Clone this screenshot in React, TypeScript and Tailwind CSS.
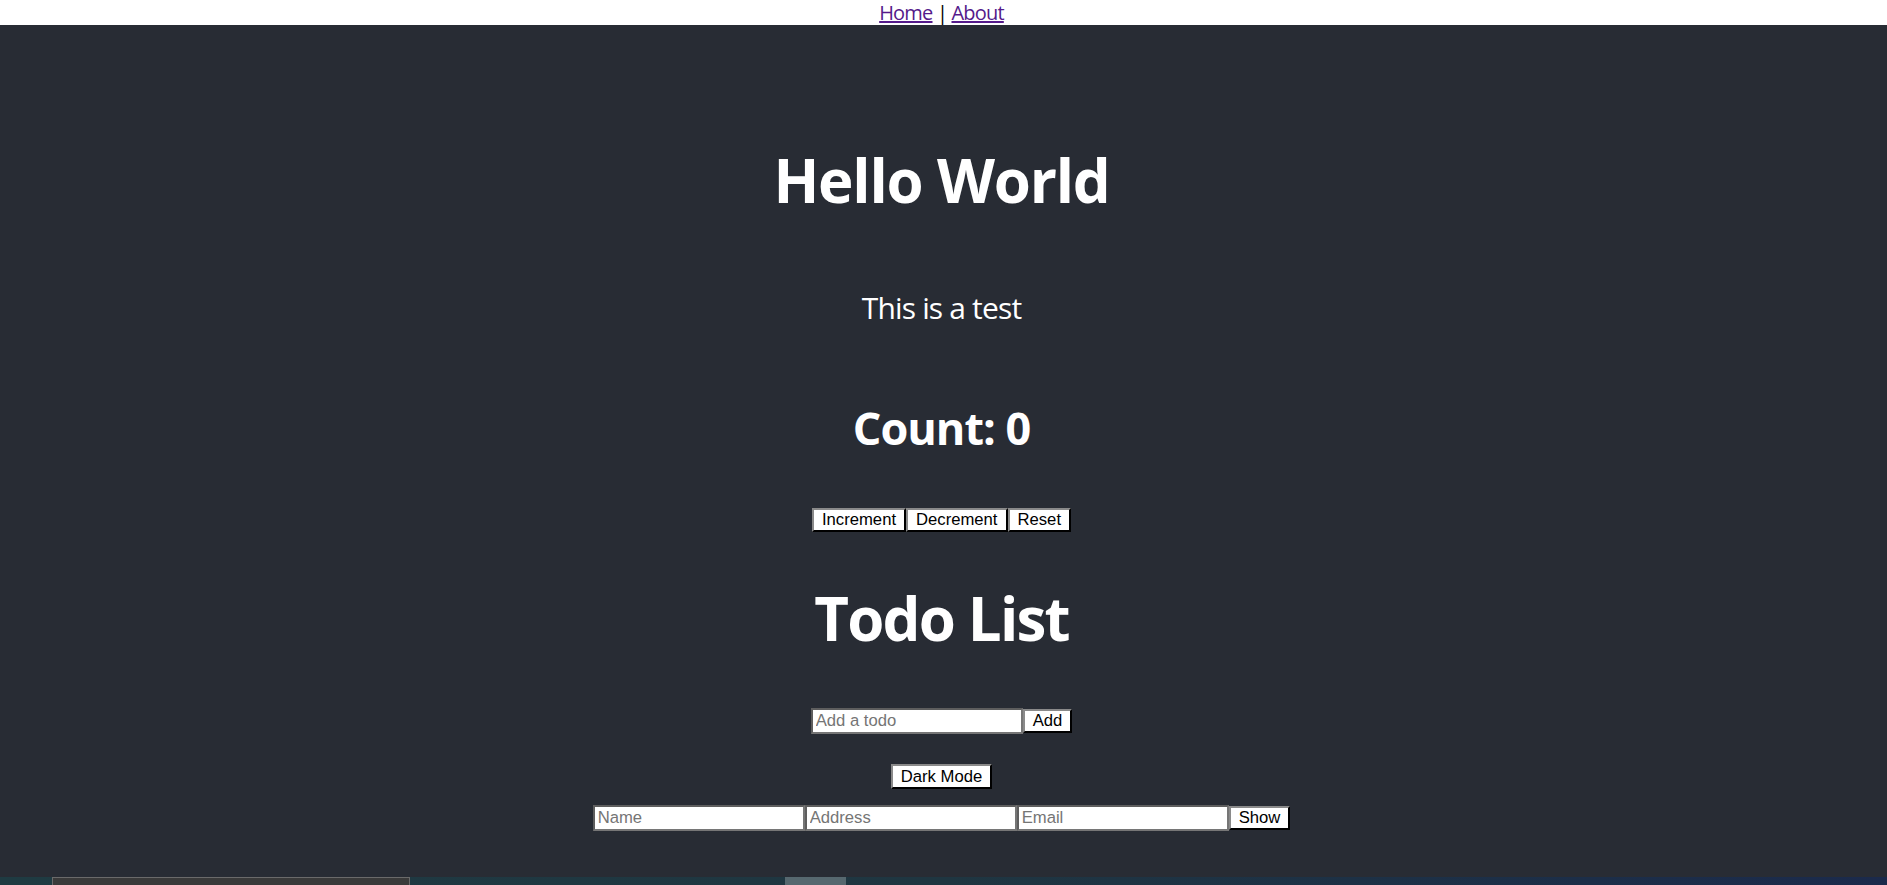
import { useState } from "react";

const btn =
  "bg-white px-[8px] h-[24px] border-2 border-t-[#8a8a8a] border-l-[#8a8a8a] border-r-black border-b-black text-black text-[16.67px] leading-[18px] font-['Liberation_Sans',Arial,sans-serif]";
const field =
  "bg-white w-[212px] h-[26px] px-[3px] border-2 border-[#767676] border-t-[#5e5e5e] border-l-[#5e5e5e] text-black text-[16.67px] font-['Liberation_Sans',Arial,sans-serif] placeholder:text-[#757575] outline-none";

function App() {
  const [count, setCount] = useState(0);
  const [todo, setTodo] = useState("");
  const [todos, setTodos] = useState<string[]>([]);
  const [dark, setDark] = useState(true);

  const addTodo = () => {
    if (!todo.trim()) return;
    setTodos([...todos, todo]);
    setTodo("");
  };

  return (
    <div className="w-[1887px] h-[885px] overflow-hidden font-['Open_Sans','Noto_Sans',sans-serif]">
      {/* Nav */}
      <div className="h-[25px] bg-white pr-[4px] text-center text-[20px] leading-[25px] tracking-[-0.04em] text-black">
        <a href="#" className="text-[#551a8b] underline">
          Home
        </a>{" "}
        |{" "}
        <a href="#" className="text-[#551a8b] underline">
          About
        </a>
      </div>

      {/* Header */}
      <div
        className={`flex h-[852px] flex-col items-center pt-[125px] pr-[4px] text-white ${
          dark ? "bg-[#282c34]" : "bg-[#3a3f4a]"
        }`}
      >
        <h1 className="text-[60px] font-bold leading-[60px] tracking-[-0.02em]">
          Hello World
        </h1>
        <p className="mt-[83px] text-[30px] leading-[30px] tracking-[-0.028em]">
          This is a test
        </p>
        <h2 className="mt-[82px] text-[45px] font-bold leading-[45px] tracking-[-0.022em]">
          Count: {count}
        </h2>
        <div className="mt-[58px] flex">
          <button className={btn} onClick={() => setCount(count + 1)}>
            Increment
          </button>
          <button className={btn} onClick={() => setCount(count - 1)}>
            Decrement
          </button>
          <button className={btn} onClick={() => setCount(0)}>
            Reset
          </button>
        </div>

        <h1 className="mt-[56px] text-[60px] font-bold leading-[60px] tracking-[-0.03em]">
          Todo List
        </h1>
        <div className="mt-[60px] flex items-center">
          <input
            value={todo}
            onChange={(e) => setTodo(e.target.value)}
            placeholder="Add a todo"
            className={field}
          />
          <button className={btn} onClick={addTodo}>
            Add
          </button>
        </div>
        {todos.length > 0 && (
          <ul className="text-[20px]">
            {todos.map((t, i) => (
              <li key={i}>{t}</li>
            ))}
          </ul>
        )}

        <button className={`mt-[30px] ${btn} h-[25px]`} onClick={() => setDark(!dark)}>
          Dark Mode
        </button>

        <div className="mt-[16px] flex items-center">
          <input placeholder="Name" className={`${field} h-[25px]`} />
          <input placeholder="Address" className={`${field} h-[25px]`} />
          <input placeholder="Email" className={`${field} h-[25px]`} />
          <button className={btn}>Show</button>
        </div>
      </div>

      {/* Bottom strip */}
      <div className="flex h-[8px] bg-gradient-to-r from-[#1f3b42] via-[#1f3641] to-[#1b2a4b]">
        <div className="w-[52px]" />
        <div className="w-[358px] border-t border-l border-r border-[#6a6a6a] bg-[#3a3a3a]" />
        <div className="w-[375px]" />
        <div className="w-[61px] bg-[#56686f]" />
      </div>
    </div>
  );
}

export default App;
